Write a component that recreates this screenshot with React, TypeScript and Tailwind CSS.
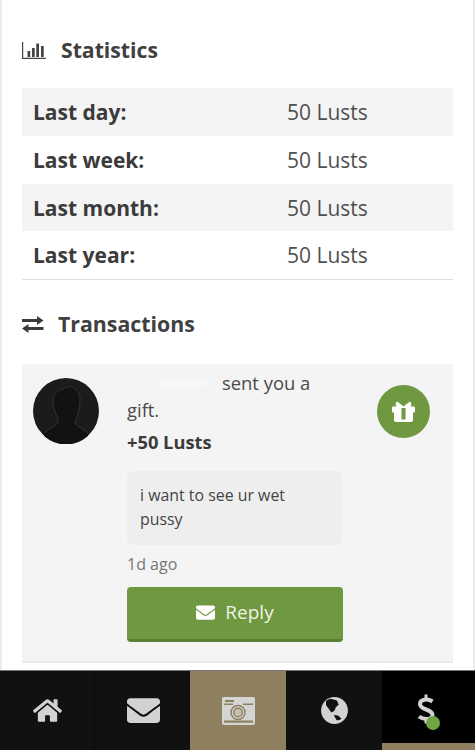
import React from "react";
import { FaHome, FaEnvelope } from "react-icons/fa";

const rows = [
  ["Last day:", "50 Lusts", "bg-[#f4f4f4]", "h-[48px]"],
  ["Last week:", "50 Lusts", "bg-white", "h-[48px]"],
  ["Last month:", "50 Lusts", "bg-[#f4f4f4]", "h-[47px]"],
  ["Last year:", "50 Lusts", "bg-white", "h-[48px]"],
];

function BarsIcon() {
  return (
    <svg width="24" height="17" viewBox="0 0 24 17" fill="#444444">
      <path d="M0 0h1.2v15.8H24V17H0z" />
      <rect x="5.5" y="9" width="2.7" height="6" />
      <rect x="10" y="6" width="2.7" height="9" />
      <rect x="14.3" y="1.5" width="2.7" height="13.5" />
      <rect x="19" y="4" width="2.7" height="11" />
    </svg>
  );
}

function ExchangeIcon() {
  return (
    <svg width="22" height="17" viewBox="0 0 22 17" fill="#3b3b3b">
      <path d="M0 3h15V0l6.5 4.5L15 9V6H0z" />
      <path d="M21.5 11H6.5V8L0 12.5 6.5 17v-3h15z" />
    </svg>
  );
}

function GiftIcon() {
  return (
    <svg width="23" height="21" viewBox="0 0 23 21" fill="#ffffff">
      <path d="M5 0.500 10.500 4.500 11.500 6H5C3.500 5 3 2 5 0.500z" />
      <path d="M18 0.500 12.500 4.500 11.500 6H18C19.500 5 20 2 18 0.500z" />
      <rect x="0" y="5.500" width="23" height="6" rx="1" />
      <path d="M2 11h19v8a2 2 0 0 1-2 2H4a2 2 0 0 1-2-2z" />
      <rect x="9.500" y="7" width="4" height="11.500" fill="#6f9841" />
    </svg>
  );
}

function CameraIcon() {
  return (
    <svg width="33" height="28" viewBox="0 0 33 28">
      <rect width="33" height="28" rx="2" fill="#d4d4d4" />
      <rect x="3" y="3" width="9" height="2" fill="#8e7f5f" />
      <rect x="2" y="6.500" width="9" height="1.500" fill="#8e7f5f" />
      <rect x="21" y="6.500" width="10" height="1.500" fill="#8e7f5f" />
      <circle cx="16" cy="15.500" r="7" fill="#d4d4d4" stroke="#8e7f5f" strokeWidth="1.500" />
      <circle cx="16" cy="15.500" r="4.300" fill="#c4c0b4" stroke="#8e7f5f" strokeWidth="1.500" />
      <rect x="2" y="23.500" width="29" height="2.200" fill="#8e7f5f" />
    </svg>
  );
}

function GlobeIcon() {
  return (
    <svg width="27" height="27" viewBox="0 0 27 27">
      <circle cx="13.500" cy="13.500" r="13.400" fill="#d2d2d2" />
      <polygon
        points="5.500,4 9.300,2.200 15.500,3.800 17.200,7.700 14.300,10 13.300,13.300 10.500,15 8,11.500 5.500,8"
        fill="#111111"
        stroke="#111111"
        strokeLinejoin="round"
      />
      <polygon
        points="13.500,18.500 17.500,19.200 20,21.800 16,23"
        fill="#111111"
        stroke="#111111"
        strokeLinejoin="round"
      />
    </svg>
  );
}

function DollarIcon() {
  return (
    <svg width="18" height="30" viewBox="0 0 18 30" fill="none" stroke="#d2d2d2" strokeWidth="4">
      <path d="M15.500 7.500C11 4.500 3 5 3 10C3 16.500 15.500 14.500 15.500 21C15.500 26 6.500 26 2 22.500" />
      <path d="M9 0.500V5M9 25V29.500" strokeWidth="3" />
    </svg>
  );
}

function Avatar() {
  return (
    <svg width="66" height="66" viewBox="0 0 66 66" className="shrink-0">
      <circle cx="33" cy="33" r="33" fill="#1a1b1d" />
      <path
        d="M12 55C16 50 22 48 25 45C26 40 22 36 20 27C19 17 24 12 30 11C33 9 35 9 37 8C44 12 48 15 47 24C47 32 44 38 42 45C45 49 50 51 55 55L55 58A33 33 0 0 1 11 58Z"
        fill="#121213"
      />
      <path
        d="M12 55C16 50 22 48 25 45C26 40 22 36 20 27C19 17 24 12 30 11C33 9 35 9 37 8C44 12 48 15 47 24C47 32 44 38 42 45C45 49 50 51 55 55"
        fill="none"
        stroke="#37332a"
        strokeWidth="1"
      />
    </svg>
  );
}

export default function App() {
  return (
    <div className="w-[475px] h-[750px] flex flex-col overflow-hidden bg-white font-['Open_Sans',sans-serif] text-[#3b3b3b]">
      <main className="flex-1 min-h-0 overflow-hidden border-x-2 border-[#ececec] pl-[20px] pr-[20px]">
        <h2 className="flex items-center h-[30px] mt-[35px] text-[21.2px] font-bold text-[#404040]">
          <BarsIcon />
          <span className="ml-[15px]">Statistics</span>
        </h2>
        <div className="mt-[23px] border-b border-[#dfdfdf]">
          {rows.map(([label, value, bg, h]) => (
            <div key={label} className={`flex items-center pt-[2px] ${h} ${bg}`}>
              <span className="w-[265px] pl-[11px] text-[21px] font-bold">{label}</span>
              <span className="text-[21px] text-[#505050]">{value}</span>
            </div>
          ))}
        </div>
        <h2 className="flex items-center h-[30px] mt-[29px] text-[21.3px] font-bold text-[#404040]">
          <ExchangeIcon />
          <span className="ml-[14px]">Transactions</span>
        </h2>
        <section className="mt-[25px] bg-[#f4f4f4] border-b-2 border-[#eaeaea] flex pt-[14px] pl-[11px] pb-[19px]">
          <Avatar />
          <div className="ml-[28px] w-[216px]">
            <p className="text-[18.4px] leading-[27px] -mt-[9px] text-[#4a4a4a]">
              <span className="relative inline-block w-[95px] h-[10px]">
                <span className="absolute left-[30px] top-[2px] w-[50px] h-[3px] bg-white/70 rounded-full blur-[2px]" />
              </span>
              sent you a gift.
            </p>
            <p className="mt-[5px] text-[18.3px] leading-[27px] font-bold">+50 Lusts</p>
            <div className="mt-[16px] h-[74px] w-[215px] rounded-[6px] bg-[#eeeeee] px-[13px] pt-[12px] text-[15.9px] leading-[24px] text-[#444444]">
              i want to see ur wet pussy
            </div>
            <p className="mt-[7px] text-[16px] leading-[24px] text-[#777777]">1d ago</p>
            <button className="mt-[11px] flex items-center justify-center gap-[10px] w-[216px] h-[55px] pb-[1px] rounded-[4px] bg-[#6f9841] border-b-[3px] border-[#5b7f35] text-[#eef3e6] text-[19px]">
              <FaEnvelope className="w-[19px] h-[19px] text-white" />
              Reply
            </button>
          </div>
          <div className="ml-[34px] mt-[7px] w-[53px] h-[53px] rounded-full bg-[#6f9841] flex items-center justify-center shrink-0">
            <GiftIcon />
          </div>
        </section>
      </main>
      <nav className="h-[80px] shrink-0 border-t border-[#777] bg-[#111111] flex text-[#d2d2d2]">
        <div className="w-[95px] flex items-center justify-center border-r border-[#0a0a0a]">
          <FaHome className="w-[29px] h-[29px]" />
        </div>
        <div className="w-[95px] flex items-center justify-center pl-[2px]">
          <FaEnvelope className="w-[33px] h-[33px]" />
        </div>
        <div className="w-[96px] flex items-center justify-center bg-[#8e7f5f]">
          <CameraIcon />
        </div>
        <div className="w-[96px] flex items-center justify-center pl-[1px]">
          <GlobeIcon />
        </div>
        <div className="relative w-[93px] flex items-center justify-center bg-black border-b-[7px] border-[#8e7f5f]">
          <span className="mr-[6px] mt-[3px] flex"><DollarIcon /></span>
          <span className="absolute left-[44px] top-[45px] w-[14px] h-[14px] rounded-full bg-[#6fa545]" />
        </div>
      </nav>
    </div>
  );
}
